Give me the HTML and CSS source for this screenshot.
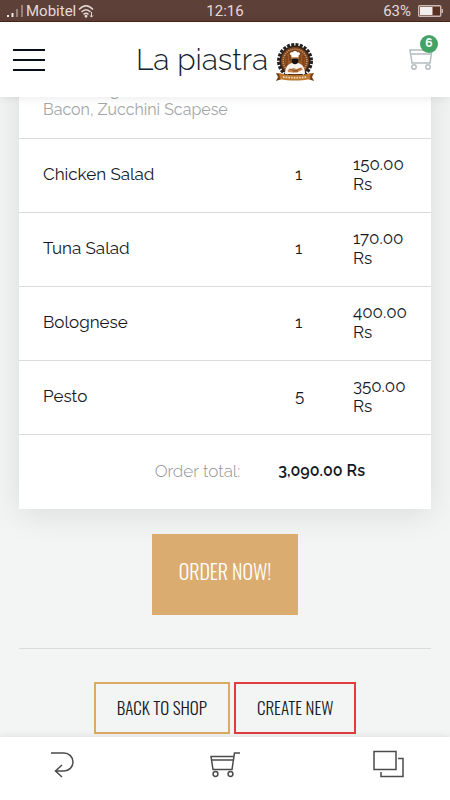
FILE: index.html
```html
<!DOCTYPE html>
<html lang="en">
<head>
    <meta charset="UTF-8">
    <meta name="viewport" content="width=device-width, initial-scale=1.0">
    <title>La piastra</title>
    <link rel="stylesheet" href="styles.css">
</head>
<body>
    <div class="status-bar">
        <div class="status-left">
            <svg width="17" height="12" viewBox="0 0 17 12" aria-hidden="true">
                <path d="M0 10h2v2H0zM4.500 8h2v4h-2z" fill="#f3e9e6"/>
                <path d="M9 4h2v8H9zM14 0h2v12h-2z" fill="#9a837d"/>
            </svg>
            <span>Mobitel</span>
            <svg width="16" height="14" viewBox="0 0 16 14" fill="none" stroke="#e6dad6" stroke-width="1.500" aria-hidden="true">
                <path d="M1 5.500Q8-2 15 5.500M3.500 8Q8 3.500 12.500 8M5.500 10.500Q8 8 10.500 10.500"/>
                <circle cx="8" cy="12.300" r=".7"/>
                <path d="M13.500 8v5M11.800 11.500l1.700 1.500 1.500-1.500" stroke-width="1"/>
            </svg>
        </div>
        <div class="status-time">12:16</div>
        <div class="status-right">
            <span>63%</span>
            <svg width="25" height="12" viewBox="0 0 25 12" aria-hidden="true">
                <rect x=".7" y=".7" width="22" height="10.600" rx="1" fill="#5a3022" stroke="#cbbab5" stroke-width="1.400"/>
                <path d="M2 2h12.500v8H2z" fill="#f3eeee"/>
                <path d="M23.500 4H25v4h-1.500z" fill="#cbbab5"/>
            </svg>
        </div>
    </div>

    <header class="header">
        <button class="menu-btn" aria-label="Menu">
            <span></span>
            <span></span>
            <span></span>
        </button>
        <a href="#" class="brand">
            <span>La piastra</span>
            <svg width="38" height="38" viewBox="0 0 38 38" aria-hidden="true">
                <circle cx="19" cy="18" r="16.500" fill="none" stroke="#24211f" stroke-width="3" stroke-dasharray="3 1.320"/>
                <circle cx="19" cy="18" r="15.500" fill="#2c211b"/>
                <circle cx="19" cy="18" r="14" fill="#7c401b"/>
                <circle cx="19" cy="18" r="11.800" fill="none" stroke="#c29a70" stroke-width="1.600" stroke-dasharray="1.200 .9"/>
                <circle cx="19" cy="18" r="10" fill="#9b5a27"/>
                <path d="M11 13v13M27 13v13M14 10v8M24 10v8" stroke="#6b3515" stroke-width="1"/>
                <path d="M9 31c0-7 3-10 7-11h6c4 1 7 4 7 11z" fill="#f6f3ef"/>
                <path d="M15.500 13h7v4c0 5-7 5-7 0z" fill="#d29a68"/>
                <path d="M15.500 16c2-.6 5-.6 7 0v2.500c-1 3.500-6 3.500-7 0z" fill="#18120f"/>
                <path d="M15.500 14v-1.500c-3-1-1-4 1-3 1-2 4-2 5 0 2-1 4 2 1 3V14z" fill="#fff"/>
                <path d="M11.500 27l6-2 3 1 5-1.500 1.500 2-6 3h-4l-5-.5z" fill="#c98650"/>
                <path d="M13 26l9 2.500M25 25.500L17 29" stroke="#74431f" stroke-width=".7"/>
                <path d="M0 30l6 1v5l-6 2 2-4zM38 30l-6 1v5l6 2-2-4z" fill="#783b14"/>
                <path d="M3 30c9 3 23 3 32 0l-1 6c-9 2-21 2-30 0z" fill="#bd7830"/>
                <path d="M7 34c8 1 16 1 24 0" fill="none" stroke="#f0d9b5" stroke-width="1.800" stroke-dasharray="1.600 1.100"/>
            </svg>
        </a>
        <a href="#" class="cart" aria-label="Cart">
            <svg width="24" height="24" viewBox="0 0 24 24" fill="none" stroke="#b4bdbf" stroke-width="1.500" aria-hidden="true">
                <path d="M1 2h22l-2 13H3zM1.500 6h21"/>
                <circle cx="5" cy="19" r="2.200"/>
                <circle cx="19" cy="19" r="2.200"/>
            </svg>
            <span class="badge">6</span>
        </a>
    </header>

    <main class="content">
        <div class="card">
            <table class="order">
                <tbody>
                    <tr class="toppings">
                        <td colspan="3">Ham Fungi<br>Bacon, Zucchini Scapese</td>
                    </tr>
                    <tr>
                        <td class="name">Chicken Salad</td>
                        <td class="qty">1</td>
                        <td class="price">150.00 Rs</td>
                    </tr>
                    <tr>
                        <td class="name">Tuna Salad</td>
                        <td class="qty">1</td>
                        <td class="price">170.00 Rs</td>
                    </tr>
                    <tr>
                        <td class="name">Bolognese</td>
                        <td class="qty">1</td>
                        <td class="price">400.00 Rs</td>
                    </tr>
                    <tr>
                        <td class="name">Pesto</td>
                        <td class="qty">5</td>
                        <td class="price">350.00 Rs</td>
                    </tr>
                </tbody>
            </table>
            <div class="total">
                <span class="total-label">Order total:</span>
                <strong>3,090.00 Rs</strong>
            </div>
        </div>

        <button class="order-btn">ORDER NOW!</button>

        <div class="actions">
            <button class="btn">BACK TO SHOP</button>
            <button class="btn btn-red">CREATE NEW</button>
        </div>
    </main>

    <nav class="bottom-nav">
        <a href="#" aria-label="Back">
            <svg width="26" height="28" viewBox="0 0 26 28" fill="none" stroke="#4b4b4b" stroke-width="1.500" aria-hidden="true">
                <path d="M2 3h13a9 9 0 0 1 0 18H7M13 15l-6.500 6 6.500 6"/>
            </svg>
        </a>
        <a href="#" aria-label="Shop">
            <svg width="32" height="28" viewBox="0 0 32 28" fill="none" stroke="#4b4b4b" stroke-width="1.500" aria-hidden="true">
                <path d="M31 3h-5.500L23 19.500H4L2 6.500h22.500M2.500 10h22"/>
                <circle cx="6.500" cy="24" r="2.400"/>
                <circle cx="21.500" cy="24" r="2.400"/>
            </svg>
        </a>
        <a href="#" aria-label="Pages">
            <svg width="32" height="28" viewBox="0 0 32 28" fill="none" stroke="#4b4b4b" stroke-width="1.500" aria-hidden="true">
                <path d="M2 1.500h22v18H2zM26 8.500h5v18H9V22"/>
            </svg>
        </a>
    </nav>
</body>
</html>
```
FILE: styles.css
```css
* {
    box-sizing: border-box;
}

body {
    font-family: 'Raleway', 'Lato', sans-serif;
    font-size: 16px;
    line-height: 20px;
    display: flex;
    flex-direction: column;
    height: 100vh;
    margin: 0;
    background-color: #f3f5f4;
    color: #14181f;
}

button {
    font-family: 'Oswald', 'Liberation Sans Narrow', sans-serif;
    cursor: pointer;
}

/* Status bar */
.status-bar {
    display: grid;
    grid-template-columns: 1fr auto 1fr;
    align-items: center;
    flex: none;
    height: 22px;
    padding: 0 7px;
    background-color: #5d4038;
    border-bottom: 1px solid #4c2618;
    color: #e6dad6;
    font-family: 'Roboto', sans-serif;
    font-size: 15px;
}

.status-left,
.status-right {
    display: flex;
    align-items: center;
    gap: 2px;
}

.status-right {
    justify-content: flex-end;
    gap: 7px;
}

/* Header */
.header {
    display: grid;
    grid-template-columns: 1fr auto 1fr;
    align-items: center;
    flex: none;
    height: 75px;
    padding: 0 17px 0 13px;
    background-color: #fff;
    box-shadow: 0 0 10px rgba(0, 0, 0, 0.1);
    z-index: 1;
}

.menu-btn {
    display: flex;
    flex-direction: column;
    gap: 8px;
    width: 32px;
    padding: 0;
    background: none;
    border: none;
}

.menu-btn span {
    height: 2px;
    background-color: #07101b;
}

.brand {
    display: flex;
    align-items: center;
    gap: 8px;
    padding-left: 4px;
    color: #14202c;
    font-size: 30px;
    font-weight: 300;
    line-height: 38px;
    text-decoration: none;
}

.brand svg {
    margin-top: 4px;
}

.cart {
    position: relative;
    display: flex;
    justify-self: end;
}

.badge {
    position: absolute;
    top: -13px;
    right: -5px;
    width: 18px;
    height: 18px;
    border-radius: 50%;
    background-color: #43a367;
    color: #fff;
    font-size: 12px;
    font-weight: bold;
    line-height: 16px;
    text-align: center;
}

/* Order list */
.content {
    display: flex;
    flex-direction: column;
    justify-content: flex-end;
    flex: 1;
    min-height: 0;
    overflow: hidden;
    padding: 0 19px 3px;
}

.card {
    background-color: #fff;
    box-shadow: 0 5px 32px rgba(0, 0, 0, 0.1);
}

.order {
    width: 100%;
    border-collapse: collapse;
}

.order td {
    height: 74px;
    padding: 0 24px 4px;
    border-bottom: 1px solid #d9dbdc;
    font-size: 17px;
}

.order .toppings td {
    padding-bottom: 2px;
    color: #a3a6a8;
    font-size: 16px;
}

.order .qty {
    width: 58px;
    padding: 0 0 4px;
}

.order .price {
    width: 78px;
    padding: 0 24px 4px 0;
}

.total {
    display: flex;
    justify-content: flex-end;
    gap: 38px;
    padding: 26px 66px 28px 24px;
}

.total-label {
    color: #8f9395;
    font-size: 17px;
    font-weight: 300;
}

.total strong {
    font-weight: 600;
}

.order-btn {
    align-self: center;
    margin: 25px 0 33px;
    padding: 25px 27px 31px;
    background-color: #dbac6f;
    border: none;
    color: #fff;
    font-size: 20px;
    font-weight: 300;
    line-height: 25px;
}

.actions {
    display: flex;
    justify-content: center;
    gap: 4px;
    padding-top: 33px;
    border-top: 1px solid #dadcdc;
}

.btn {
    padding: 14px 21px;
    background: none;
    border: 2px solid #dcaa64;
    color: #14181f;
    font-size: 17px;
    font-weight: 300;
    line-height: 20px;
}

.btn-red {
    border-color: #e13c40;
}

/* Bottom navigation */
.bottom-nav {
    display: flex;
    justify-content: space-between;
    flex: none;
    padding: 13px 46px 22px;
    background-color: #fff;
    box-shadow: 0 0 8px rgba(0, 0, 0, 0.1);
    z-index: 1;
}

.bottom-nav a {
    display: flex;
    justify-content: center;
    width: 32px;
}
```
